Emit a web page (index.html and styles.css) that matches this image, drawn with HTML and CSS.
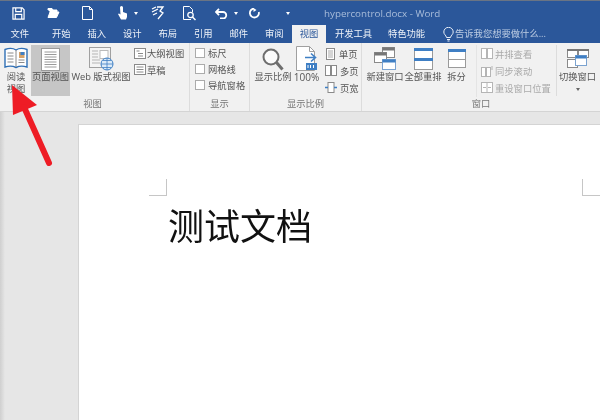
FILE: index.html
```html
<!DOCTYPE html>
<html lang="zh-CN">
<head>
<meta charset="utf-8">
<title>hypercontrol.docx - Word</title>
<link rel="stylesheet" href="styles.css">
</head>
<body>
<div class="window">
  <header class="titlebar">
    <div class="qat">
      <svg class="q q-save" width="13" height="13" viewBox="0 0 14 14"><path d="M1 1h10l2 2v10H1z M4 1v4h6V1 M3.500 13V8h7v5" fill="none" stroke="#fff" stroke-width="1.300"/></svg>
      <svg class="q q-open" width="13" height="12" viewBox="0 0 13 12"><path d="M1 3V1.500h4L6 3h4v2H3L1 10.500h8.500L12 5H3" fill="#fff" stroke="#fff" stroke-width="1"/></svg>
      <svg class="q q-new" width="11" height="14" viewBox="0 0 11 14"><path d="M.5.500h7l3 3v10H.500zM7.500.5v3h3" fill="none" stroke="#fff"/></svg>
      <svg class="q q-touch" width="11" height="14" viewBox="0 0 11 14"><path d="M3 1.500a1.500 1.500 0 0 1 3 0V6l4 1.500V11l-1 2.500H4L1 8l1-.5 1.500 1z" fill="#fff"/></svg>
      <span class="caret q-caret1"></span>
      <svg class="q q-spell" width="14" height="14" viewBox="0 0 14 14"><path d="M1 3l4-2M1 6l6-3 M2 9l4-2M6 1l6 0-3 4 3 2-5 6" fill="none" stroke="#fff" stroke-width="1.300"/></svg>
      <svg class="q q-preview" width="13" height="15" viewBox="0 0 13 15"><path d="M8 13.500H.5V.5h6l3 3V6" fill="none" stroke="#fff"/><circle cx="7.500" cy="9" r="2.700" fill="none" stroke="#fff" stroke-width="1.300"/><path d="M9.500 11l3 3" stroke="#fff" stroke-width="1.500"/></svg>
      <svg class="q q-undo" width="13" height="11" viewBox="0 0 13 11"><path d="M1 4h7a3.200 3.200 0 0 1 0 6.500H5M4 .8L1 4l3 3.200" fill="none" stroke="#fff" stroke-width="1.800"/></svg>
      <span class="caret q-caret2"></span>
      <svg class="q q-redo" width="11" height="11" viewBox="0 0 11 11"><path d="M5 .5 A4.500 4.500 0 1 0 9.800 4" fill="none" stroke="#fff" stroke-width="1.800"/><path d="M4.500 0v4l3-2z" fill="#fff"/></svg>
      <span class="caret q-caret3"></span>
    </div>
    <div class="doc-title">hypercontrol.docx - Word</div>
  </header>

  <nav class="tabs">
    <span class="tab tab-file">文件</span>
    <span class="tab">开始</span>
    <span class="tab">插入</span>
    <span class="tab">设计</span>
    <span class="tab">布局</span>
    <span class="tab">引用</span>
    <span class="tab">邮件</span>
    <span class="tab">审阅</span>
    <span class="tab tab-active">视图</span>
    <span class="tab tab-wide">开发工具</span>
    <span class="tab tab-wide">特色功能</span>
    <span class="tell">
      <svg width="11" height="15" viewBox="0 0 11 15"><path d="M3.500 10.500C3 8 .8 7.500.8 5a4.700 4.700 0 0 1 9.400 0c0 2.500-2.200 3-2.700 5.500zM4 12.500h3M4.500 14h2" fill="none" stroke="#e8eef7"/></svg>
      告诉我您想要做什么...
    </span>
  </nav>

  <section class="ribbon">
    <div class="group g-views">
      <div class="items">
        <div class="big b-read">
          <svg class="ico" width="24" height="22" viewBox="0 0 24 22"><path d="M1 2.500c4-1.500 8-1.500 11 .5 3-2 7-2 11-.5V20c-4-1.200-8-1-11 .5-3-1.500-7-1.700-11-.5z" fill="#fff" stroke="#2f6fb5" stroke-width="1.400"/><path d="M12 3v17" stroke="#8a8a8a"/><path d="M3.500 6h6M3.500 9h6M3.500 12h6M3.500 15h6M14.500 13h6M14.500 15.500h6" stroke="#8a8a8a"/><rect x="15" y="5" width="5.500" height="6" fill="#d7a36a"/><rect x="16.500" y="5" width="4" height="3" fill="#3f7fc4"/></svg>
          <span class="lbl">阅读<br>视图</span>
        </div>
        <div class="big b-page">
          <svg class="ico" width="19" height="23" viewBox="0 0 19 23"><rect x=".5" y=".5" width="18" height="22" fill="#fff" stroke="#9a9a9a"/><path d="M3.500 4h12M3.500 6.500h12M3.500 9h12M3.500 11.500h12M3.500 14h12M3.500 16.500h12M3.500 19h12" stroke="#9a9a9a"/></svg>
          <span class="lbl">页面视图</span>
        </div>
        <div class="big b-web">
          <svg class="ico" width="25" height="24" viewBox="0 0 25 24"><rect x=".5" y=".5" width="21" height="20" fill="#f4f4f4" stroke="#a0a0a0"/><rect x="11" y="3.500" width="8" height="8" fill="#fff" stroke="#bbb"/><path d="M3 4h6M3 7h6M3 10h6M3 13h8M3 16h8" stroke="#b5b5b5"/><circle cx="18" cy="17" r="6" fill="#dcebf8" stroke="#3f7fc4"/><path d="M12 17h12M18 11v12M14 13.500h8M14 20.500h8" stroke="#3f7fc4" stroke-width=".8"/></svg>
          <span class="lbl">Web 版式视图</span>
        </div>
        <div class="smalls s-views">
          <div class="small"><svg width="12" height="11" viewBox="0 0 12 11"><rect x=".5" y=".5" width="11" height="10" fill="#fff" stroke="#8a8a8a"/><path d="M2.500 3h3M4 5.500h5M4 8h5" stroke="#8a8a8a"/></svg>大纲视图</div>
          <div class="small"><svg width="12" height="11" viewBox="0 0 12 11"><rect x=".5" y=".5" width="11" height="10" fill="#fff" stroke="#8a8a8a"/><path d="M2.500 3h7M2.500 5.500h7M2.500 8h7" stroke="#8a8a8a"/></svg>草稿</div>
        </div>
      </div>
      <div class="group-label label-views">视图</div>
    </div>

    <div class="group g-show">
      <div class="items checks">
        <label class="check"><span class="box"></span>标尺</label>
        <label class="check"><span class="box"></span>网格线</label>
        <label class="check"><span class="box"></span>导航窗格</label>
      </div>
      <div class="group-label">显示</div>
    </div>

    <div class="group g-zoom">
      <div class="items">
        <div class="big b-zoom">
          <svg class="ico" width="22" height="23" viewBox="0 0 22 23"><circle cx="9" cy="9" r="7.500" fill="#fbfbfb" stroke="#6e6e6e" stroke-width="2"/><path d="M14.500 14.500l6 7" stroke="#6e6e6e" stroke-width="3"/></svg>
          <span class="lbl">显示比例</span>
        </div>
        <div class="big b-100">
          <svg class="ico" width="22" height="25" viewBox="0 0 22 25"><path d="M.5.500h13l5 5v19H.5z" fill="#fff" stroke="#a0a0a0"/><path d="M13.500.5v5h5" fill="none" stroke="#a0a0a0"/><path d="M9 11.500h10M15 7.500l4.500 4-4.500 4" fill="none" stroke="#3f7fc4" stroke-width="1.600"/><rect x="10" y="17" width="11" height="7" fill="#3f7fc4"/><path d="M12 19v3M14.500 19v3M17.500 19v3" stroke="#fff"/></svg>
          <span class="lbl">100%</span>
        </div>
        <div class="smalls s-zoom">
          <div class="small"><svg width="11" height="12" viewBox="0 0 11 12"><rect x="1.500" y=".5" width="8" height="11" fill="#fff" stroke="#8a8a8a"/><path d="M3 3h5M3 5h5M3 7h5M3 9h5" stroke="#aaa"/></svg>单页</div>
          <div class="small"><svg width="12" height="11" viewBox="0 0 12 11"><rect x=".5" y=".5" width="5" height="10" fill="#fff" stroke="#8a8a8a"/><rect x="6.500" y=".5" width="5" height="10" fill="#fff" stroke="#8a8a8a"/></svg>多页</div>
          <div class="small"><svg width="12" height="11" viewBox="0 0 12 11"><rect x="3" y=".5" width="6" height="10" fill="#fff" stroke="#8a8a8a"/><path d="M0 5.500h3M9 5.500h3" stroke="#3f7fc4" stroke-width="1.500"/></svg>页宽</div>
        </div>
      </div>
      <div class="group-label">显示比例</div>
    </div>

    <div class="group g-window">
      <div class="items">
        <div class="big b-new">
          <svg class="ico" width="22" height="23" viewBox="0 0 22 23"><rect x="8.500" y=".5" width="12" height="10" fill="#fff" stroke="#8a8a8a"/><rect x="8.500" y=".5" width="12" height="3" fill="#777"/><rect x=".5" y="5.500" width="12" height="10" fill="#fff" stroke="#8a8a8a"/><rect x=".5" y="5.500" width="12" height="3" fill="#777"/><rect x="8.500" y="12.500" width="13" height="10" fill="#fff" stroke="#7ba3d0"/><rect x="8.500" y="12.500" width="13" height="3" fill="#3f7fc4"/></svg>
          <span class="lbl">新建窗口</span>
        </div>
        <div class="big b-all">
          <svg class="ico" width="19" height="22" viewBox="0 0 19 22"><rect x=".5" y=".5" width="18" height="21" fill="#fff" stroke="#9a9a9a"/><rect x="0" y="0" width="19" height="3" fill="#3f7fc4"/><rect x="0" y="10" width="19" height="3" fill="#3f7fc4"/></svg>
          <span class="lbl">全部重排</span>
        </div>
        <div class="big b-split">
          <svg class="ico" width="18" height="19" viewBox="0 0 18 19"><rect x=".5" y=".5" width="17" height="18" fill="#fff" stroke="#9a9a9a"/><rect x="0" y="0" width="18" height="3" fill="#3f7fc4"/><path d="M0 10.500h18" stroke="#9a9a9a"/></svg>
          <span class="lbl">拆分</span>
        </div>
        <div class="smalls s-window">
          <div class="small"><svg width="12" height="11" viewBox="0 0 12 11"><rect x=".5" y=".5" width="5" height="10" fill="#fff" stroke="#b5b5b5"/><rect x="6.500" y=".5" width="5" height="10" fill="#fff" stroke="#b5b5b5"/></svg>并排查看</div>
          <div class="small"><svg width="12" height="12" viewBox="0 0 12 12"><rect x=".5" y="2.500" width="4" height="9" fill="#fff" stroke="#b5b5b5"/><rect x="5.500" y="2.500" width="4" height="9" fill="#fff" stroke="#b5b5b5"/><path d="M11 1v4" stroke="#b5b5b5"/></svg>同步滚动</div>
          <div class="small"><svg width="12" height="11" viewBox="0 0 12 11"><rect x=".5" y=".5" width="11" height="10" fill="#fff" stroke="#b5b5b5"/><path d="M6 0v11M2 5.500h3M7 5.500h3" stroke="#b5b5b5"/></svg>重设窗口位置</div>
        </div>
        <div class="big b-switch">
          <svg class="ico" width="22" height="19" viewBox="0 0 22 19"><rect x=".5" y=".5" width="10" height="8" fill="#fff" stroke="#8a8a8a"/><rect x="11.500" y=".5" width="10" height="8" fill="#fff" stroke="#8a8a8a"/><rect x=".5" y="10.500" width="10" height="8" fill="#fff" stroke="#8a8a8a"/><rect x="0" y="0" width="22" height="2" fill="#777"/><rect x="8.500" y="6.500" width="11" height="10" fill="#fff" stroke="#7ba3d0"/><rect x="8.500" y="6.500" width="11" height="3" fill="#3f7fc4"/></svg>
          <span class="lbl">切换窗口</span>
          <span class="drop"></span>
        </div>
      </div>
      <div class="group-label">窗口</div>
    </div>
  </section>

  <main class="workspace">
    <article class="page">
      <span class="crop crop-l"></span>
      <span class="crop crop-r"></span>
      <p class="doc-text">测试文档</p>
    </article>
  </main>

  <svg class="arrow" width="60" height="90" viewBox="0 0 60 90"><path d="M12 2L37 22 13 32z" fill="#ee1c25"/><path d="M24 24L49 80" stroke="#ee1c25" stroke-width="6" stroke-linecap="round"/></svg>
</div>
</body>
</html>
```

FILE: styles.css
```css
* { box-sizing: border-box; }
html, body { margin: 0; padding: 0; }
body {
  width: 600px;
  height: 420px;
  overflow: hidden;
  font-family: "Open Sans", "Noto Sans CJK SC", sans-serif;
  font-size: 9.300px;
  color: #555;
}
.window {
  position: relative;
  width: 600px;
  height: 420px;
  display: flex;
  flex-direction: column;
  background: #e6e6e6;
  overflow: hidden;
  filter: blur(.35px);
}

/* title bar */
.titlebar {
  height: 25px;
  flex: none;
  background: #2b579a;
  border-top: 1px solid #6a7484;
  display: flex;
  align-items: center;
}
.qat { display: flex; align-items: center; width: 324px; flex: none; }
.q { display: block; flex: none; }
.q-save { margin-left: 12px; }
.q-open { margin-left: 22px; }
.q-new { margin-left: 22px; }
.q-touch { margin-left: 24px; }
.q-spell { margin-left: 13px; }
.q-preview { margin-left: 18px; }
.q-undo { margin-left: 19px; }
.q-redo { margin-left: 11px; }
.caret {
  width: 0;
  height: 0;
  border-left: 2.500px solid transparent;
  border-right: 2.500px solid transparent;
  border-top: 3px solid #fff;
  flex: none;
}
.q-caret1 { margin-left: 6px; }
.q-caret2 { margin-left: 6px; }
.q-caret3 { margin-left: 26px; }
.doc-title {
  color: #a9bdda;
  font-size: 9.800px;
  white-space: nowrap;
}

/* tabs */
.tabs {
  height: 18px;
  flex: none;
  background: #2b579a;
  display: flex;
  align-items: stretch;
  color: #eef2f8;
  font-size: 9.300px;
  line-height: 18px;
}
.tab { flex: none; width: 35.500px; text-align: center; }
.tab-file { margin-left: 2px; margin-right: 6px; }
.tab-active {
  background: #f1f1f1;
  color: #2b579a;
  width: 34px;
  margin-right: 1px;
}
.tab-wide { width: 53px; }
.tell {
  margin-left: 10px;
  display: flex;
  align-items: center;
  gap: 1px;
  color: #bccce3;
}

/* ribbon */
.ribbon {
  height: 69px;
  flex: none;
  background: #f1f1f1;
  border-bottom: 1px solid #d4d4d4;
  display: flex;
}
.group {
  display: flex;
  flex-direction: column;
  border-right: 1px solid #dcdcdc;
  flex: none;
}
.g-views { width: 190px; }
.g-show { width: 60px; }
.g-zoom { width: 112px; }
.g-window { flex: 1; border-right: 0; }
.items { flex: 1; display: flex; padding-top: 2px; min-height: 0; }
.group-label {
  height: 14px;
  flex: none;
  text-align: center;
  line-height: 14px;
  color: #777;
}
.label-views { padding-right: 4px; }
.big {
  display: flex;
  flex-direction: column;
  align-items: center;
  flex: none;
  white-space: nowrap;
  height: 51px;
}
.ico { display: block; flex: none; }
.lbl { text-align: center; line-height: 12px; }
.b-read { width: 28px; margin-left: 2px; padding-top: 2px; }
.b-read .lbl { margin-top: 2px; }
.b-page { width: 39px; margin-left: 1px; background: #c6c6c6; padding-top: 3px; }
.b-web { width: 60px; padding-top: 2px; margin-left: 1px; }
.b-zoom { width: 40px; margin-left: 3px; padding-top: 3px; }
.b-100 { width: 27px; padding-top: 1px; }
.b-100 .lbl { font-size: 10px; }
.b-new { width: 38px; margin-left: 4px; padding-top: 2px; }
.b-new .lbl { margin-top: 1px; }
.b-all { width: 38px; padding-top: 3px; }
.b-all .lbl { margin-top: 1px; }
.b-split { width: 27px; padding-top: 4px; margin-left: 1px; }
.b-split .lbl { margin-top: 3px; }
.b-switch {
  width: 42px;
  padding-top: 4px;
  border-left: 1px solid #dcdcdc;
  margin-left: 2px;
}
.b-switch .lbl { margin-top: 3px; }
.drop {
  margin-top: 5px;
  border-left: 2px solid transparent;
  border-right: 2px solid transparent;
  border-top: 3px solid #666;
}
.smalls { display: flex; flex-direction: column; flex: none; }
.small {
  height: 17px;
  display: flex;
  align-items: center;
  gap: 2px;
  white-space: nowrap;
}
.small svg { flex: none; }
.s-views { margin-left: 3px; }
.s-views .small { height: 16.500px; gap: 1px; }
.s-zoom { margin-left: 5px; }
.s-zoom .small { gap: 3px; }
.s-window {
  margin-left: 6px;
  padding: 0 0 0 4px;
  width: 78px;
  border-left: 1px solid #e4e4e4;
}
.s-window .small { color: #aaa; }
.checks {
  flex-direction: column;
  padding: 2px 0 0 5px;
}
.check {
  display: flex;
  align-items: center;
  gap: 3px;
  height: 16px;
  white-space: nowrap;
}
.box {
  width: 10px;
  height: 10px;
  background: #fff;
  border: 1px solid #ababab;
  flex: none;
}

/* document */
.workspace {
  flex: 1;
  padding: 12px 0 0 78px;
  background: linear-gradient(90deg, #cfcfcf 0, #e6e6e6 5px);
  min-height: 0;
}
.page {
  position: relative;
  height: 100%;
  background: #fff;
  border: 1px solid #d4d4d4;
  border-right: 0;
  border-bottom: 0;
  padding: 76px 0 0 89px;
}
.crop {
  position: absolute;
  top: 54px;
  width: 18px;
  height: 17px;
  border-bottom: 1px solid #c6c6c6;
}
.crop-l { left: 70px; border-right: 1px solid #c6c6c6; }
.crop-r { left: 503px; border-left: 1px solid #c6c6c6; }
.doc-text {
  margin: 0;
  font-family: "Noto Sans CJK SC", sans-serif;
  font-size: 36px;
  line-height: 46px;
  color: #111;
}

/* annotation */
.arrow {
  position: absolute;
  left: 0;
  top: 83px;
}
```
